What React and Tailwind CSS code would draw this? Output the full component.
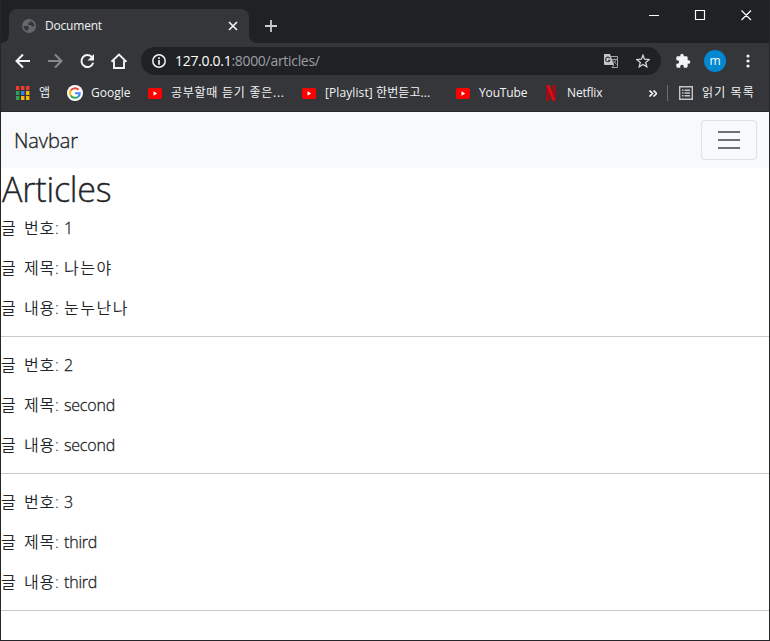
import React from 'react';

const UI = "font-['Open_Sans','Noto_Sans_CJK_KR',sans-serif]";

const articles = [
  { id: '1', title: '나는야', content: '눈누난나' },
  { id: '2', title: 'second', content: 'second' },
  { id: '3', title: 'third', content: 'third' },
];

function Globe() {
  return (
    <svg className="h-4 w-4" viewBox="0 0 16 16">
      <circle cx="8" cy="8" r="7" fill="#64676b" />
      <path d="M2.600 8H5.600C7.200 8 8 8.800 8 10V11H6.600V13.200C4.200 12.600 2.600 10.600 2.600 8ZM9.600 2.900C12 3.700 13.400 5.600 13.400 8C12.600 8.800 11.400 8.800 10.600 8L9.800 7H7.200V5.600C7.200 4.800 7.800 4.600 8.400 4.600C9.200 4.600 9.600 4 9.600 2.900Z" fill="#35363a" />
    </svg>
  );
}

function AppsGrid() {
  const colors = ['#f23b30', '#f23b30', '#f23b30', '#2fa156', '#3080ed', '#f9b508', '#2fa156', '#f9b508', '#f9b508'];
  return (
    <svg className="h-[14px] w-[14px]" viewBox="0 0 14 14">
      {colors.map((c, i) => (
        <rect key={i} x={(i % 3) * 5} y={Math.floor(i / 3) * 5} width="3.400" height="4" fill={c} />
      ))}
    </svg>
  );
}

function GoogleIcon() {
  return (
    <svg className="h-4 w-4" viewBox="0 0 16 16">
      <circle cx="8" cy="8" r="8" fill="#fff" />
      <g fill="none" strokeWidth="2">
        <path d="M11.6 4.7A4.9 4.9 0 0 0 3.8 5.6" stroke="#ea4335" />
        <path d="M3.8 5.4A4.9 4.9 0 0 0 3.8 10.6" stroke="#fbbc05" />
        <path d="M3.8 10.4A4.9 4.9 0 0 0 11.2 11.7" stroke="#34a853" />
        <path d="M8.1 8.2H12.8C12.8 9.7 12.2 10.9 11.1 11.8" stroke="#4285f4" />
      </g>
    </svg>
  );
}

function YoutubeIcon() {
  return (
    <svg className="h-[11px] w-[14px]" viewBox="0 0 14 11">
      <rect width="14" height="11" rx="2" fill="#f00" />
      <path d="M5.500 3.300v4.400L9.200 5.500Z" fill="#fff" />
    </svg>
  );
}

function NetflixIcon() {
  return (
    <svg className="h-4 w-[10px]" viewBox="0 0 10 16">
      <path d="M.5 0h3v15.600L.5 16ZM6.500 0h3v16l-3-.4Z" fill="#b1060f" />
      <path d="M.5 0h3L9.500 16l-3-.5Z" fill="#e50914" />
    </svg>
  );
}

function TabStrip() {
  return (
    <div className="flex h-[43px] items-start bg-[#202124]">
      <div className="relative ml-2 mt-[9px] flex h-[34px] w-[240px] items-center rounded-t-lg bg-[#35363a] pl-3">
        <svg className="absolute -left-2 bottom-0 h-2 w-2" viewBox="0 0 8 8"><path d="M8 0v8H0a8 8 0 0 0 8-8Z" fill="#35363a" /></svg>
        <svg className="absolute -right-2 bottom-0 h-2 w-2" viewBox="0 0 8 8"><path d="M0 0v8h8a8 8 0 0 1-8-8Z" fill="#35363a" /></svg>
        <Globe />
        <span className="ml-2 w-[180px] text-[12px] leading-4 tracking-[-0.2px] text-[#f1f3f4]">Document</span>
        <svg className="ml-[3px] h-[10px] w-[10px]" viewBox="0 0 10 10"><path d="m1 1 8 8M9 1 1 9" stroke="#f1f3f4" strokeWidth="1.7" /></svg>
      </div>
      <svg className="ml-4 mt-5 h-3 w-3" viewBox="0 0 12 12"><path d="M6 0v12M0 6h12" stroke="#c9cbcd" strokeWidth="1.8" /></svg>
      <svg className="ml-auto mr-[17px] mt-[10px] h-[11px] w-[103px]" viewBox="0 0 103 11" fill="none" stroke="#fff">
        <path d="M0 5.500h10M46.500 .5h9v9h-9ZM92.500 .5l9.500 9.500M102 .5l-9.500 9.500" strokeWidth="1.150" />
      </svg>
    </div>
  );
}

function Toolbar() {
  return (
    <div className="flex h-9 items-center bg-[#35363a] pl-[14px]">
      <svg className="h-4 w-[112px]" viewBox="0 0 112 16" fill="none" strokeWidth="2">
        <path d="M15 8H2M8 1.500 1.500 8 8 14.500" stroke="#f1f3f4" />
        <path d="M33 8h13M40 1.500 46.500 8 40 14.500" stroke="#86888a" />
        <path d="M77.200 4.300A6 6 0 1 0 78.200 9.800" stroke="#f1f3f4" />
        <path d="M79 1v6.500h-6.500Z" fill="#f1f3f4" />
        <path d="M96.500 8.800 104 1.500 111.500 8.800M99 7.500V15h10V7.500" stroke="#f1f3f4" strokeWidth="1.900" />
      </svg>
      <div className="ml-[14px] flex h-7 w-[520px] items-center rounded-full bg-[#202124] pl-[11px] pr-[11px]">
        <svg className="h-[14px] w-[14px]" viewBox="0 0 14 14" fill="none" stroke="#f1f3f4">
          <circle cx="7" cy="7" r="6.200" strokeWidth="1.500" />
          <path d="M7 3.300v1.700M7 6.100v4.600" strokeWidth="1.700" />
        </svg>
        <span className="ml-[9px] text-[14px] leading-5 tracking-[-0.3px] text-[#9aa0a6]"><span className="text-white">127.0.0.1</span>:8000/articles/</span>
        <svg className="ml-auto h-[14px] w-[14px]" viewBox="0 0 14 14">
          <path d="M0 0h6l4 11H1a1 1 0 0 1-1-1Z" fill="#c4c7c9" />
          <path d="M6.500 2.500h7v11H8L10 11" fill="none" stroke="#a5a8aa" />
          <path d="M5.800 4.200A2.300 2.300 0 1 0 6 6.300H4" fill="none" stroke="#35363a" strokeWidth="1.100" />
          <path d="M8 5.500h5M10.500 4.500v1M12 5.500c-.5 2-1.500 3-3 4M9 6.500l3.500 4" fill="none" stroke="#a5a8aa" strokeWidth=".9" />
        </svg>
        <svg className="ml-[18px] h-[14px] w-[14px]" viewBox="0 0 14 14">
          <path d="m7 1.200 1.600 4 4.600.3-3.500 2.900 1.100 4.400L7 10.400l-3.800 2.400 1.100-4.400L.8 5.500l4.600-.3Z" fill="none" stroke="#d2d4d6" strokeWidth="1.300" />
        </svg>
      </div>
      <svg className="ml-[14px] h-4 w-4" viewBox="0 0 24 24">
        <path fill="#f1f3f4" d="M20.500 11H19V7c0-1.100-.9-2-2-2h-4V3.500a2.500 2.500 0 0 0-5 0V5H4c-1.100 0-2 .9-2 2v3.800h1.500a2.700 2.700 0 0 1 0 5.400H2V20c0 1.100.9 2 2 2h3.800v-1.500a2.700 2.700 0 0 1 5.400 0V22H17c1.100 0 2-.9 2-2v-4h1.500a2.500 2.500 0 0 0 0-5Z" />
      </svg>
      <span className="ml-[13px] flex h-[22px] w-[22px] items-center justify-center rounded-full bg-[#0288d1] pb-[1px] text-[12px] leading-none text-white">m</span>
      <svg className="ml-5 h-[14px] w-1" viewBox="0 0 4 14" fill="#f1f3f4"><circle cx="2" cy="2" r="1.600" /><circle cx="2" cy="7" r="1.600" /><circle cx="2" cy="12" r="1.600" /></svg>
    </div>
  );
}

function Bookmark({ icon, label, className, labelClass }) {
  return (
    <div className={`flex shrink-0 items-center whitespace-nowrap ${className}`}>
      {icon}
      <span className={labelClass}>{label}</span>
    </div>
  );
}

function BookmarksBar() {
  return (
    <div className="flex h-8 items-center border-b border-[#28292c] bg-[#35363a] pb-[5px] pl-[15px] text-[12px] leading-4 text-[#f1f3f4]">
      <Bookmark className="w-[51px]" icon={<AppsGrid />} label="앱" labelClass="ml-[9px]" />
      <Bookmark className="w-[81px]" icon={<GoogleIcon />} label="Google" labelClass="ml-2" />
      <Bookmark className="w-[154px]" icon={<YoutubeIcon />} label="공부할때 듣기 좋은..." labelClass="ml-[9px] tracking-[0.75px]" />
      <Bookmark className="w-[154px]" icon={<YoutubeIcon />} label="[Playlist] 한번듣고..." labelClass="ml-[9px] tracking-[0.1px]" />
      <Bookmark className="w-[90px]" icon={<YoutubeIcon />} label="YouTube" labelClass="ml-[9px] tracking-[-0.15px]" />
      <Bookmark className="w-[103px]" icon={<NetflixIcon />} label="Netflix" labelClass="ml-[11px] tracking-[-0.15px]" />
      <svg className="h-[7px] w-2 shrink-0" viewBox="0 0 8 7" fill="none" stroke="#f1f3f4" strokeWidth="1.700"><path d="m.5.5 3 3-3 3M4.500.5l3 3-3 3" /></svg>
      <span className="ml-[10px] h-4 w-px bg-[#6c6e72]" />
      <svg className="ml-[11px] h-[14px] w-[14px] shrink-0" viewBox="0 0 14 14" fill="none" stroke="#c4c7c9" strokeWidth="1.400">
        <path d="M.7.7h12.600v12.600H.7ZM3 4.200h1.500M5.500 4.200h5.500M3 7h1.500M5.500 7h5.500M3 9.800h1.500M5.500 9.800h5.500" />
      </svg>
      <span className="ml-[9px] whitespace-nowrap tracking-[1.1px]">읽기 목록</span>
    </div>
  );
}

function Field({ label, value }) {
  const hangul = /[가-힣]/.test(value);
  return (
    <p className="mb-4 flex h-6 text-[16px] font-[350] leading-6">
      <span className="w-[23px]">글</span>
      <span className="w-10 tracking-[0.8px]">{label}:</span>
      <span className={hangul ? 'tracking-[1.5px]' : 'tracking-[-0.2px] [-webkit-text-stroke:0.3px_#212529]'}>{value}</span>
    </p>
  );
}

export default function App() {
  return (
    <div className={`flex h-[641px] w-[770px] flex-col overflow-hidden border-x border-b border-[#252628] bg-white text-[#212529] ${UI}`}>
      <TabStrip />
      <Toolbar />
      <div className="h-px bg-[#35363a]" />
      <BookmarksBar />
      <nav className="flex h-14 shrink-0 items-center justify-between bg-[#f8f9fa] px-3">
        <a className="mt-[2px] pl-px text-[20px] font-[350] leading-[30px] tracking-[-0.1px] [-webkit-text-stroke:0.35px_#212529]">Navbar</a>
        <button className="flex h-10 w-14 items-center justify-center rounded border border-[#dfe0e1]">
          <svg className="h-[30px] w-[30px]" viewBox="0 0 30 30"><path d="M4 7h22M4 15h22M4 23h22" stroke="rgba(0,0,0,.55)" strokeWidth="2" strokeMiterlimit="10" /></svg>
        </button>
      </nav>
      <main>
        <h1 className="mb-[7px] pl-px pt-px text-[34px] font-[330] leading-10 tracking-[-0.2px] [-webkit-text-stroke:0.35px_#212529]">Articles</h1>
        {articles.map((a) => (
          <article key={a.id}>
            <Field label="번호" value={a.id} />
            <Field label="제목" value={a.title} />
            <Field label="내용" value={a.content} />
            <hr className="mb-4 border-[#c8c9ca]" />
          </article>
        ))}
      </main>
    </div>
  );
}
